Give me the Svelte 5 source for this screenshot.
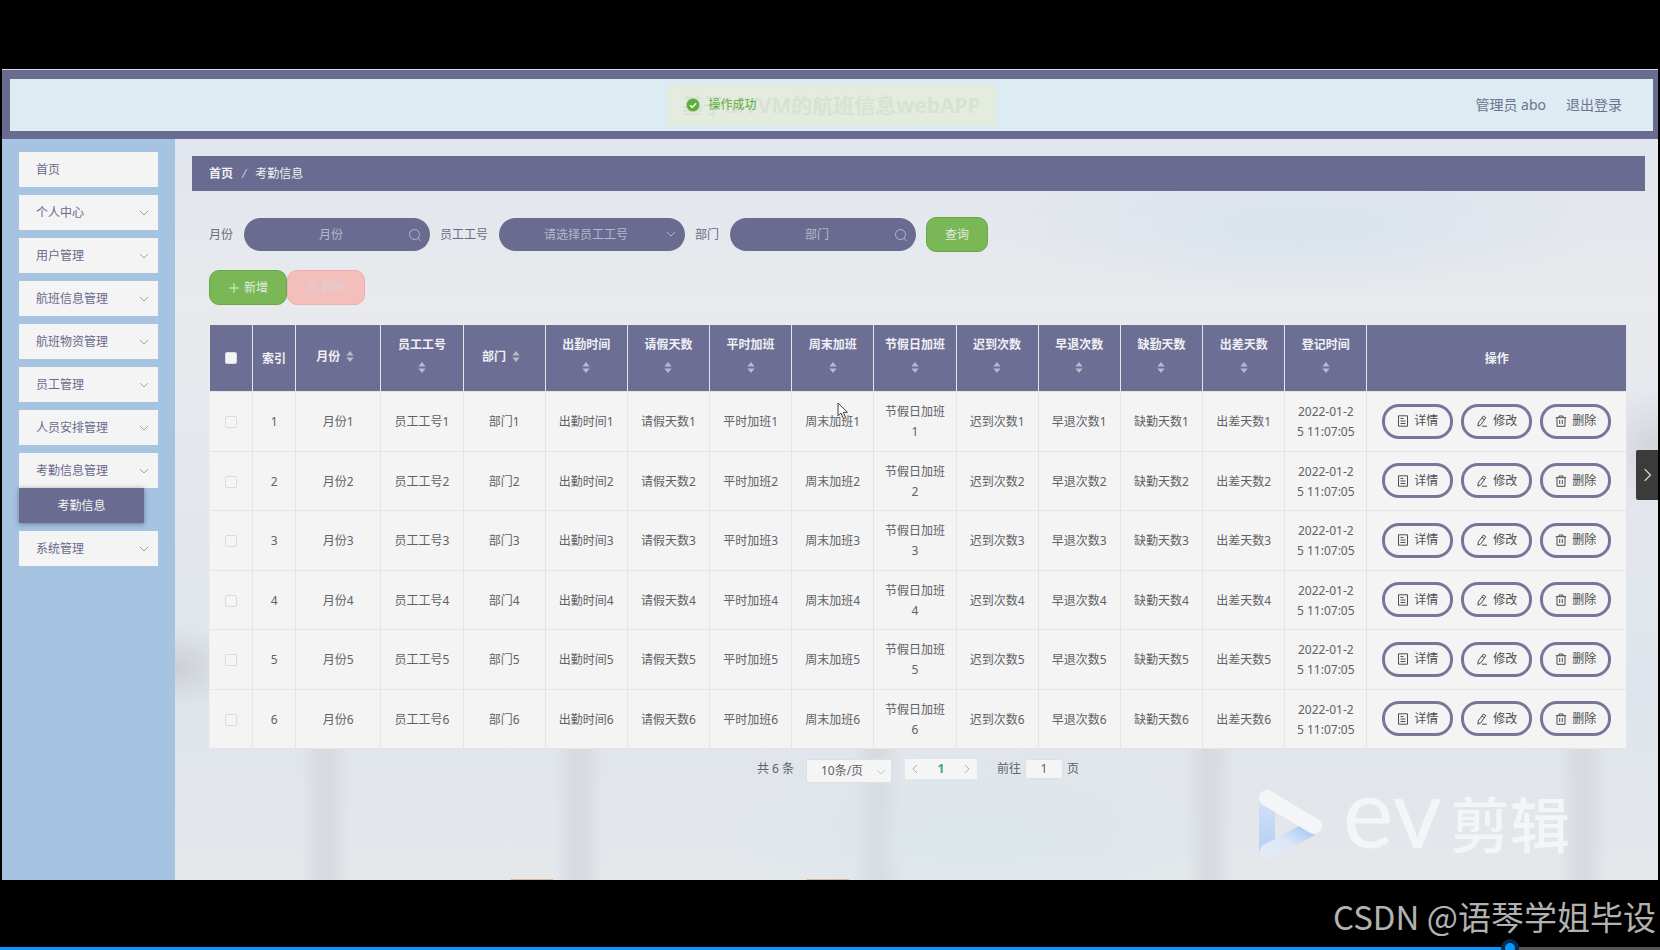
<script>
    let month = "";
    let department = "";
    let staffNo = "";
    let pageSize = "10";
    let pageNo = "1";

    const menus = [
        { name: "首页" },
        { name: "个人中心", more: true },
        { name: "用户管理", more: true },
        { name: "航班信息管理", more: true },
        { name: "航班物资管理", more: true },
        { name: "员工管理", more: true },
        { name: "人员安排管理", more: true },
        { name: "考勤信息管理", more: true, child: "考勤信息" },
        { name: "系统管理", more: true },
    ];

    const columns = [
        "月份", "员工工号", "部门", "出勤时间", "请假天数", "平时加班", "周末加班",
        "节假日加班", "迟到次数", "早退次数", "缺勤天数", "出差天数",
    ];

    const rows = [1, 2, 3, 4, 5, 6].map((id) => ({
        id,
        cells: columns.map((name) => name + id),
        time: "2022-01-25 11:07:05",
        checked: false,
    }));

    let allChecked = false;

    const toggleAll = () => {
        rows.forEach((row) => {
            row.checked = allChecked;
        });
    };
</script>

{#snippet chevron()}
    <svg class="chevron" viewBox="0 0 12 12" aria-hidden="true"><path d="M2 4l4 4 4-4" /></svg>
{/snippet}

{#snippet search()}
    <svg class="search" viewBox="0 0 14 14" aria-hidden="true">
        <circle cx="6.5" cy="6.5" r="5" /><path d="M10 10.200l2.600 2.800" />
    </svg>
{/snippet}

{#snippet trash()}
    <svg class="icon" viewBox="0 0 12 12" aria-hidden="true">
        <path d="M.8 2.7h10.4M4 2.7V1h4v1.7M2 2.7v8.6h8V2.7M4.7 5v4M7.3 5v4" />
    </svg>
{/snippet}

{#snippet caret()}
    <span class="caret">
        <svg viewBox="0 0 8 12" aria-hidden="true"><path d="M4 0l4 5H0zM0 7h8l-4 5z" /></svg>
    </span>
{/snippet}

<div class="page">
    <div class="screen">
        <header>
            <h1>基于MVVM的航班信息webAPP</h1>
            <nav class="user">
                <span>管理员 abo</span>
                <a href="#logout">退出登录</a>
            </nav>
            <div class="message" role="status">
                <svg viewBox="0 0 14 14" aria-hidden="true">
                    <circle cx="7" cy="7" r="6.5" fill="#5fae3c" />
                    <path d="M4 7.2l2.2 2.2 4-4.2" fill="none" stroke="#eef6e8" stroke-width="1.6" />
                </svg>
                <span>操作成功</span>
            </div>
        </header>

        <div class="body">
            <aside>
                {#each menus as menu}
                    <div class="menu-group">
                        <button class="menu">
                            {menu.name}
                            {#if menu.more}{@render chevron()}{/if}
                        </button>
                        {#if menu.child}
                            <button class="submenu">{menu.child}</button>
                        {/if}
                    </div>
                {/each}
            </aside>

            <main>
                <nav class="breadcrumb">
                    <a href="#home">首页</a>
                    <i>/</i>
                    <span>考勤信息</span>
                </nav>

                <section class="content">
                    <form class="filters" on:submit|preventDefault>
                        <label for="month">月份</label>
                        <div class="pill">
                            <input id="month" type="text" placeholder="月份" bind:value={month} />
                            {@render search()}
                        </div>
                        <label for="staff">员工工号</label>
                        <div class="pill">
                            <select id="staff" bind:value={staffNo}>
                                <option value="">请选择员工工号</option>
                                {#each rows as row}
                                    <option value={String(row.id)}>员工工号{row.id}</option>
                                {/each}
                            </select>
                            {@render chevron()}
                        </div>
                        <label for="department">部门</label>
                        <div class="pill">
                            <input id="department" type="text" placeholder="部门" bind:value={department} />
                            {@render search()}
                        </div>
                        <button class="btn query" type="submit">查询</button>
                    </form>

                    <div class="tools">
                        <button class="btn">
                            <svg class="icon" viewBox="0 0 12 12" aria-hidden="true"><path d="M6 1v10M1 6h10" /></svg>
                            新增
                        </button>
                        <button class="btn danger" disabled>{@render trash()}删除</button>
                    </div>

                    <table>
                        <colgroup>
                            <col class="narrow" /><col class="narrow" /><col class="month" />
                            {#each columns as _}<col class="field" />{/each}
                            <col class="actions" />
                        </colgroup>
                        <thead>
                            <tr>
                                <th><input type="checkbox" aria-label="全选" bind:checked={allChecked} on:change={toggleAll} /></th>
                                <th class="index">索引</th>
                                {#each columns as name}
                                    <th>{name}{@render caret()}</th>
                                {/each}
                                <th>登记时间{@render caret()}</th>
                                <th>操作</th>
                            </tr>
                        </thead>
                        <tbody>
                            {#each rows as row}
                                <tr>
                                    <td><input type="checkbox" aria-label="选择 {row.id}" bind:checked={row.checked} /></td>
                                    <td>{row.id}</td>
                                    {#each row.cells as cell}
                                        <td>{cell}</td>
                                    {/each}
                                    <td>{row.time}</td>
                                    <td class="ops-cell">
                                        <div class="ops">
                                            <button>
                                                <svg class="icon" viewBox="0 0 12 12" aria-hidden="true">
                                                    <path d="M1.5.8h9v10.4h-9zM3.5 3.5h3M3.5 6h5M3.5 8.5h5" />
                                                </svg>
                                                详情
                                            </button>
                                            <button>
                                                <svg class="icon" viewBox="0 0 12 12" aria-hidden="true">
                                                    <path d="M7.4 1l2.4 1.6-5 7.2-2.9 1.4.3-3.2zM6 3l2.4 1.7M6 11.2h5" />
                                                </svg>
                                                修改
                                            </button>
                                            <button>{@render trash()}删除</button>
                                        </div>
                                    </td>
                                </tr>
                            {/each}
                        </tbody>
                    </table>

                    <div class="pagination">
                        <span>共 6 条</span>
                        <div class="size">
                            <select aria-label="每页条数" bind:value={pageSize}>
                                <option value="10">10条/页</option>
                                <option value="20">20条/页</option>
                                <option value="50">50条/页</option>
                            </select>
                            {@render chevron()}
                        </div>
                        <div class="pager">
                            <button aria-label="上一页"><svg viewBox="0 0 12 12"><path d="M8 2L4 6l4 4" /></svg></button>
                            <button class="current">1</button>
                            <button aria-label="下一页"><svg viewBox="0 0 12 12"><path d="M4 2l4 4-4 4" /></svg></button>
                        </div>
                        <label class="jump">前往 <input type="text" bind:value={pageNo} /> 页</label>
                    </div>
                </section>
            </main>
        </div>

        <button class="drawer" aria-label="展开">
            <svg viewBox="0 0 12 12"><path d="M4 1l5 5-5 5" /></svg>
        </button>

        <div class="brand">
            <svg viewBox="0 0 64 70" aria-hidden="true">
                <defs>
                    <linearGradient id="left" x1="0" y1="0" x2="0" y2="1">
                        <stop offset="0" stop-color="#d3e0f7" />
                        <stop offset="1" stop-color="#b4cff5" />
                    </linearGradient>
                    <linearGradient id="low" x1="0" y1="1" x2="1" y2="0">
                        <stop offset="0.1" stop-color="#e3ebf6" />
                        <stop offset="0.5" stop-color="#dbe6f8" />
                        <stop offset="0.9" stop-color="#a9c9f4" />
                    </linearGradient>
                </defs>
                <path d="M0 10l16 12v28L0 62z" fill="url(#left)" />
                <path d="M3 56L42 35l14 10-42 23C4 73-3 62 3 56z" fill="url(#low)" />
                <path d="M8 8l47 28" stroke="#f4f5f6" stroke-width="16" stroke-linecap="round" />
            </svg>
            <div><span class="latin">ev</span>剪辑</div>
        </div>

        <svg class="cursor" viewBox="0 0 12 18" aria-hidden="true">
            <path d="M1 1v13l3-3 2.4 5.6 2.2-1L6.300 10.300H10.500z" fill="#f8f8f8" stroke="#444" />
        </svg>
    </div>

    <footer>
        <p>CSDN @语琴学姐毕设</p>
        <input class="progress" type="range" min="0" max="1000" value="914" aria-label="播放进度" />
    </footer>
</div>

<style>
    :global(body) {
        margin: 0;
        background: #000;
    }

    .page,
    .page * {
        box-sizing: border-box;
    }

    .page {
        display: flex;
        flex-direction: column;
        min-height: 100vh;
        padding-top: 69px;
        background: #000;
        color: #606266;
        font: 12px/20px "Noto Sans", "Noto Sans CJK SC", sans-serif;
    }

    button,
    input,
    select {
        margin: 0;
        padding: 0;
        border: none;
        background: none;
        color: inherit;
        font: inherit;
        appearance: none;
    }

    button {
        cursor: pointer;
    }

    a {
        color: inherit;
        text-decoration: none;
    }

    svg {
        flex: none;
        fill: none;
    }

    .chevron,
    .icon {
        width: 12px;
        height: 12px;
        stroke: currentColor;
    }

    .search {
        width: 14px;
        height: 14px;
        stroke: currentColor;
    }

    .screen {
        position: relative;
        display: flex;
        flex: 1;
        flex-direction: column;
        margin: 0 2px;
        border-top: 1px solid #d8dbd8;
    }

    /* Header */
    header {
        position: relative;
        display: grid;
        grid-template-columns: 1fr auto 1fr;
        align-items: center;
        height: 69px;
        padding: 0 31px;
        border: solid #6a6b90;
        border-width: 9px 5px 8px 8px;
        background: #ddebf3;
    }

    h1 {
        grid-column: 2;
        margin: 0;
        color: #6f7787;
        font-size: 21px;
        line-height: 28px;
    }

    .user {
        display: flex;
        justify-content: flex-end;
        gap: 20px;
        color: #6f7391;
        font-size: 14px;
    }

    .message {
        position: absolute;
        top: 5px;
        left: 50%;
        display: flex;
        align-items: center;
        gap: 9px;
        width: 328px;
        height: 42px;
        padding-left: 17px;
        transform: translateX(-50%);
        border: 1px solid #dfecd6;
        border-radius: 3px;
        background: rgba(227, 236, 221, 0.9);
        color: #5fae3c;
    }

    .message svg {
        width: 14px;
        height: 14px;
    }

    .body {
        display: flex;
        flex: 1;
    }

    /* Sidebar */
    aside {
        flex: none;
        width: 173px;
        padding: 13px 17px;
        background: #a7c3e2;
    }

    .menu-group {
        margin-bottom: 8px;
    }

    .menu {
        display: flex;
        align-items: center;
        justify-content: space-between;
        width: 100%;
        height: 35px;
        padding: 0 8px 0 17px;
        background: #f4f4f4;
        color: #696a8c;
    }

    .menu .chevron {
        color: #a0a2ad;
    }

    .submenu {
        display: block;
        width: 125px;
        height: 35px;
        background: #6a6b90;
        box-shadow: 0 1px 5px rgba(60, 70, 110, 0.6);
        color: #f4f4f4;
    }

    /* Main area, with soft pillars in the backdrop */
    main {
        flex: 1;
        min-width: 0;
        padding: 17px 13px 0 17px;
        background:
            linear-gradient(#d9b98c, #d9b98c) 632px 100% / 42px 1px no-repeat,
            linear-gradient(#d9b98c, #d9b98c) 336px 100% / 42px 1px no-repeat,
            radial-gradient(60px 40px at 0 528px, #ccd0d5, transparent),
            radial-gradient(60px 60px at 100% 310px, #d0d4da, transparent),
            radial-gradient(300px 70px at 76% 88px, rgba(211, 225, 236, 0.7), transparent),
            radial-gradient(260px 90px at 54% 700px, rgba(216, 229, 234, 0.7), transparent),
            linear-gradient(90deg, transparent, #d7dbe0 40%, #d7dbe0 60%, transparent) 126px 100% / 48px 260px no-repeat,
            linear-gradient(90deg, transparent, #d7dbe0 40%, #d7dbe0 60%, transparent) 380px 100% / 48px 260px no-repeat,
            linear-gradient(90deg, transparent, #d7dbe0 40%, #d7dbe0 60%, transparent) 678px 100% / 48px 260px no-repeat,
            linear-gradient(90deg, transparent, #d7dbe0 40%, #d7dbe0 60%, transparent) 1010px 100% / 48px 260px no-repeat,
            linear-gradient(90deg, transparent, #d7dbe0 40%, #d7dbe0 60%, transparent) 1384px 100% / 48px 260px no-repeat,
            linear-gradient(#e1e5ed, #e8eaed 22%, #dfe4ec 75%, #e4e8eb);
    }

    .breadcrumb {
        display: flex;
        align-items: center;
        gap: 9px;
        height: 35px;
        padding: 0 17px;
        background: #6a6b90;
        color: #f0f0f2;
    }

    .breadcrumb a {
        font-weight: 700;
    }

    .breadcrumb i {
        color: #c5c7d2;
    }

    .content {
        padding: 26px 18px 0 17px;
    }

    .filters {
        display: flex;
        align-items: center;
        gap: 10px;
        color: #6a6b83;
    }

    .pill {
        position: relative;
        width: 186px;
        height: 33px;
        margin-left: 1px;
        border-radius: 17px;
        background: #6a6b90;
        color: #b6b8cb;
    }

    .pill input,
    .pill select {
        width: 100%;
        height: 100%;
        padding: 0 26px 0 14px;
        text-align: center;
        text-align-last: center;
    }

    .pill input::placeholder {
        color: #b6b8cb;
        opacity: 1;
    }

    .pill svg {
        position: absolute;
        top: 10px;
        right: 8px;
        pointer-events: none;
    }

    .btn {
        display: flex;
        align-items: center;
        justify-content: center;
        gap: 4px;
        width: 78px;
        height: 35px;
        border: 1px solid #69a74b;
        border-radius: 10px;
        background: #7ab857;
        color: #e3e9e2;
    }

    .query {
        width: 62px;
    }

    .danger {
        border-color: #e8b2b0;
        background: #f4bfbb;
        color: #dccfd5;
    }

    .tools {
        display: flex;
        margin: 18px 0 20px;
    }

    /* Table */
    table {
        width: 100%;
        height: 424px;
        border-collapse: separate;
        border-spacing: 0;
        border-left: 1px solid #eceef0;
        table-layout: fixed;
        background: #f4f4f4;
        text-align: center;
    }

    .narrow {
        width: 43px;
    }

    .month {
        width: 85px;
    }

    .field {
        width: 82px;
    }

    .actions {
        width: 259px;
    }

    th,
    td {
        padding: 0 10px;
        border-right: 1px solid #e4e5e7;
        border-bottom: 1px solid #e4e5e7;
        word-break: break-all;
    }

    td {
        padding-top: 2px;
    }

    .ops-cell {
        padding-top: 0;
    }

    th {
        height: 67px;
        background: #6d6e94;
        color: #f0f0f4;
        font-weight: 700;
        line-height: 23px;
    }

    .index {
        padding: 0;
    }

    .caret {
        display: inline-flex;
        align-items: flex-start;
        justify-content: center;
        width: 20px;
        height: 27px;
        padding-top: 6px;
        vertical-align: top;
    }

    .caret svg {
        width: 8px;
        height: 11px;
        fill: #b8bac8;
    }

    input[type="checkbox"] {
        display: block;
        width: 12px;
        height: 12px;
        margin: 0 auto;
        border: 1px solid #d9dbdf;
        border-radius: 2px;
        background: #f5f5f5;
    }

    input[type="checkbox"]:checked {
        background: #6a6b90;
    }

    .ops {
        display: flex;
        justify-content: center;
        gap: 8px;
    }

    .ops button {
        display: flex;
        align-items: center;
        justify-content: center;
        gap: 5px;
        width: 71px;
        height: 35px;
        border: 3px solid #75769a;
        border-radius: 17px;
        color: #4c4d50;
    }

    /* Pagination */
    .pagination {
        display: flex;
        align-items: flex-start;
        justify-content: center;
        padding: 10px 0 24px;
    }

    .size {
        position: relative;
        width: 86px;
        height: 24px;
        margin: 0 13px 0 12px;
        border: 1px solid #dcdfe3;
        border-radius: 2px;
        background: #f5f5f5;
    }

    .size select {
        width: 100%;
        height: 100%;
        padding: 0 20px 0 6px;
        text-align-last: center;
    }

    .size .chevron {
        position: absolute;
        top: 6px;
        right: 4px;
        color: #c0c4cc;
        pointer-events: none;
    }

    .pager {
        display: flex;
        margin-right: 20px;
        background: #f5f5f5;
    }

    .pager button {
        display: flex;
        align-items: center;
        justify-content: center;
        width: 20px;
        height: 20px;
    }

    .pager svg {
        width: 12px;
        height: 12px;
        stroke: #b0b3b8;
    }

    .pager .current {
        width: 32px;
        color: #3fa58a;
        font-weight: 700;
    }

    .jump {
        display: flex;
        gap: 4px;
    }

    .jump input {
        width: 38px;
        height: 20px;
        border: 1px solid #dcdfe3;
        border-radius: 3px;
        background: #f5f5f5;
        text-align: center;
    }

    /* Things floating over the screen */
    .drawer {
        position: absolute;
        top: 380px;
        right: 0;
        width: 22px;
        height: 50px;
        border-radius: 2px 0 0 2px;
        background: #3b3b3b;
    }

    .drawer svg {
        display: block;
        width: 14px;
        height: 14px;
        margin: 0 auto;
        stroke: #e0e0e0;
    }

    .brand {
        position: absolute;
        right: 88px;
        bottom: 20px;
        display: flex;
        align-items: center;
        gap: 20px;
        height: 70px;
        color: #f4f5f6;
        font-size: 60px;
        font-weight: 500;
        line-height: 70px;
        pointer-events: none;
    }

    .brand svg {
        width: 64px;
        height: 70px;
    }

    .brand .latin {
        margin-right: 8px;
        font-family: Lato, sans-serif;
        font-size: 96px;
        font-weight: 400;
        line-height: 0;
    }

    .cursor {
        position: absolute;
        top: 332px;
        left: 835px;
        width: 12px;
        height: 18px;
        pointer-events: none;
    }

    footer {
        position: relative;
        height: 70px;
        overflow: hidden;
    }

    footer p {
        margin: 0;
        padding: 14px 4px 0 0;
        color: #b2b2b2;
        font: 33px/44px "Noto Sans CJK SC", sans-serif;
        text-align: right;
    }

    .progress {
        position: absolute;
        bottom: -8px;
        left: 0;
        width: 100%;
        height: 20px;
        background: linear-gradient(90deg, #0a95ff 91%, #555 91%) 0 9px / 100% 3px no-repeat;
    }

    .progress::-webkit-slider-thumb {
        width: 18px;
        height: 18px;
        border: 4px solid #062c4d;
        border-radius: 50%;
        background: #0a95ff;
        appearance: none;
    }
</style>
